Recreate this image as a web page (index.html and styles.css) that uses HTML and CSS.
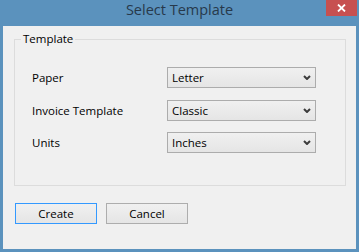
FILE: index.html
```html
<!DOCTYPE html>
<html>
<head>
<meta charset="utf-8">
<title>Select Template</title>
<link rel="stylesheet" href="styles.css">
</head>
<body>
<div class="window">
  <div class="titlebar">
    <div class="spacer"></div>
    <div class="title">Select Template</div>
    <div class="close-wrap">
      <div class="close">
        <svg width="9" height="8" viewBox="0 0 9 8"><path d="M1 0.5 L8 7.5 M8 0.5 L1 7.5" stroke="#ffffff" stroke-width="1.8" fill="none"/></svg>
      </div>
    </div>
  </div>
  <div class="client">
    <fieldset class="group">
      <legend class="legend">Template</legend>
      <div class="rows">
        <div class="label">Paper</div>
        <div class="dropdown"><span class="value">Letter</span><svg class="chev" width="8" height="5" viewBox="0 0 8 5"><path d="M1 1 L4 4 L7 1" stroke="#3c3c3c" stroke-width="2" fill="none"/></svg></div>
        <div class="label">Invoice Template</div>
        <div class="dropdown"><span class="value">Classic</span><svg class="chev" width="8" height="5" viewBox="0 0 8 5"><path d="M1 1 L4 4 L7 1" stroke="#3c3c3c" stroke-width="2" fill="none"/></svg></div>
        <div class="label">Units</div>
        <div class="dropdown"><span class="value">Inches</span><svg class="chev" width="8" height="5" viewBox="0 0 8 5"><path d="M1 1 L4 4 L7 1" stroke="#3c3c3c" stroke-width="2" fill="none"/></svg></div>
      </div>
    </fieldset>
    <div class="buttons">
      <button class="btn btn-default">Create</button>
      <button class="btn">Cancel</button>
    </div>
  </div>
</div>
</body>
</html>
```

FILE: styles.css
```css
html, body {
  margin: 0;
  padding: 0;
}
body {
  width: 359px;
  height: 252px;
  overflow: hidden;
  font-family: "Open Sans", "Noto Sans", sans-serif;
  font-size: 11px;
  color: #000;
}
.window {
  width: 359px;
  height: 252px;
  background: #5b92bd;
  display: flex;
  flex-direction: column;
}
.titlebar {
  height: 26px;
  display: grid;
  grid-template-columns: 1fr auto 1fr;
}
.title {
  font-size: 14.5px;
  line-height: 20px;
  color: #27394b;
  white-space: nowrap;
}
.close-wrap {
  display: flex;
  justify-content: flex-end;
  align-items: flex-start;
}
.close {
  width: 31px;
  height: 16px;
  margin-right: 2px;
  background: #c75050;
  display: flex;
  align-items: center;
  justify-content: center;
}
.client {
  flex: 1;
  margin: 0 3px 3px 3px;
  background: #f0f0f0;
  display: flex;
  flex-direction: column;
}
.group {
  margin: 5px 10px 0 11px;
  padding: 0 0 32px 17px;
  border: 1px solid #dcdcdc;
  min-width: 0;
}
.legend {
  padding: 0 2px;
  margin-left: -11px;
  font-size: 11.5px;
  line-height: 16px;
}
.rows {
  margin-top: 20px;
  display: grid;
  grid-template-columns: 135px 149px;
  grid-auto-rows: 21px;
  row-gap: 11.5px;
  align-items: center;
}
.label {
  font-size: 11.5px;
}
.dropdown {
  height: 21px;
  box-sizing: border-box;
  border: 1px solid #acacac;
  background: linear-gradient(#f0f0f0, #e5e5e5);
  display: flex;
  align-items: center;
  justify-content: space-between;
  padding: 0 4px 0 4px;
  font-size: 11.5px;
}
.chev {
  display: block;
}
.buttons {
  margin: 17px 0 0 12px;
  display: flex;
  gap: 9px;
}
.btn {
  width: 82px;
  height: 21px;
  box-sizing: border-box;
  border: 1px solid #adadad;
  background: linear-gradient(#f0f0f0, #e5e5e5);
  font-family: "Open Sans", "Noto Sans", sans-serif;
  font-size: 11.5px;
  color: #000;
  padding: 0;
  margin: 0;
}
.btn-default {
  border-color: #3399ff;
}
```
